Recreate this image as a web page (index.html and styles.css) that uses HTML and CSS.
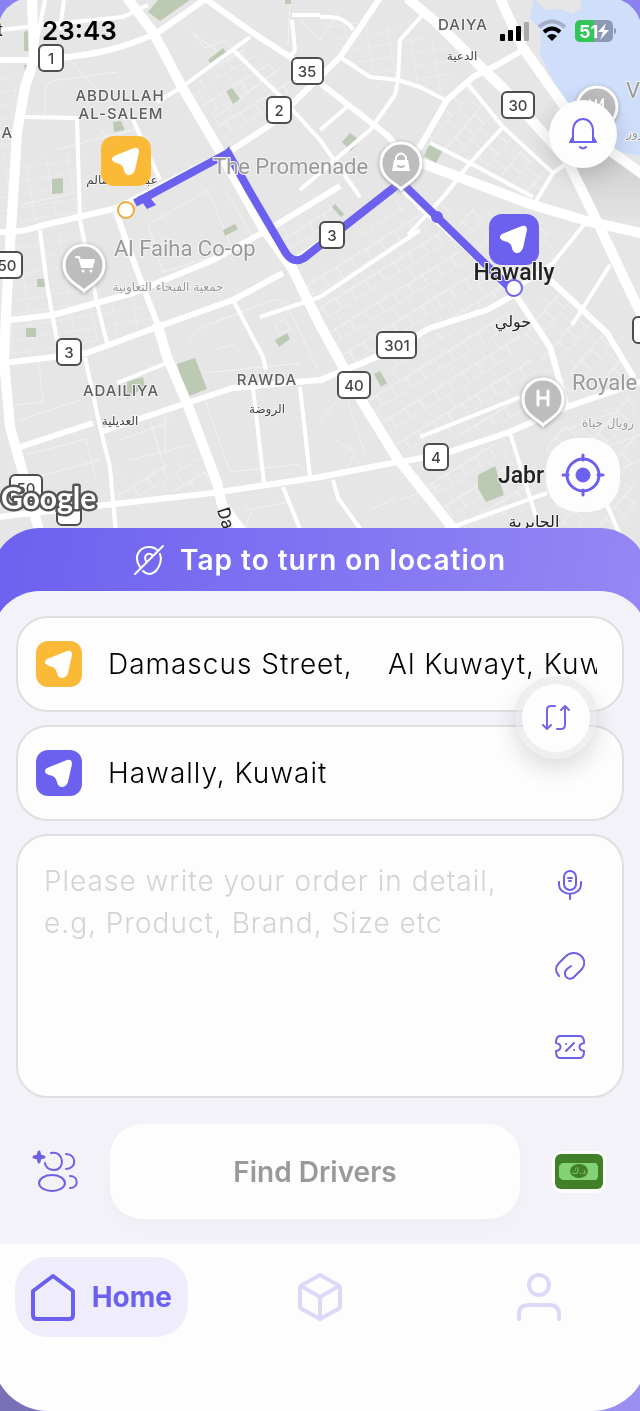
FILE: index.html
```html
<!DOCTYPE html>
<html lang="en">
<head>
    <meta charset="UTF-8">
    <meta name="viewport" content="width=device-width, initial-scale=1">
    <title>Find Drivers</title>
    <link rel="stylesheet" href="styles.css">
</head>
<body>
<div class="screen">
    <header class="map">
        <svg class="map-canvas" viewBox="0 0 640 550" preserveAspectRatio="xMidYMin slice">
            <defs>
                <pattern id="streets" width="17" height="26" patternUnits="userSpaceOnUse" patternTransform="rotate(-32)">
                    <path class="lane" d="M0 0H17M0 0V15M8 15V26M0 15H17"/>
                </pattern>
                <pattern id="streets-b" width="21" height="13" patternUnits="userSpaceOnUse" patternTransform="rotate(-9)">
                    <path class="lane" d="M0 0H21M0 0V13"/>
                </pattern>
                <pattern id="streets-c" width="15" height="30" patternUnits="userSpaceOnUse" patternTransform="rotate(-50)">
                    <path class="lane" d="M0 0H15M0 0V17M7 17V30M0 17H15"/>
                </pattern>
                <linearGradient id="shade" x1="0" y1="0" x2="0" y2="1">
                    <stop offset="0" stop-color="#777" stop-opacity=".22"/>
                    <stop offset="1" stop-color="#777" stop-opacity="0"/>
                </linearGradient>
                <path id="pin" d="M0 26C-4 21-20 16-20 0a20 20 0 0 1 40 0c0 16-16 21-20 26z"/>
                <path id="arrow" d="M-12-5L8-13Q13-14 13-9L9 9Q7 14 3 14-1 14-2 9-3 3-10 2-17-1-12-5z"/>
            </defs>

            <rect width="640" height="550" fill="#e6e6e6"/>

            <!-- water -->
            <path fill="#cedefb" d="M534 0L530 18 541 30 540 55 566 106 620 152 640 156V0z"/>
            <path fill="#e6e6e6" d="M536 0l8 10 16-1 12 5 10-6-2-8z"/>
            <path fill="url(#shade)" d="M610 150l30 20v60l-40-10-30-54z"/>

            <!-- blocks of small streets -->
            <path fill="url(#streets-b)" d="M0 240l82-12 22 112-100 18zM100 300l45-14 12 36-50 18zM25 160l50-6 4 60-60 12zM320 20l75 5 4 55-50-15zM400 30l60 20-14 45-42-14zM0 60l20 30-8 130H0z"/>
            <path fill="url(#streets)" d="M300 290l100-92 112 92-90 45-75 32zM365 395l50-55 92-28 50 95-155 45zM190 90l50-45 60 40-70 60zM265 235l55-45 26 40-52 22zM395 470l110-30 28 70-80 16zM120 475l90-20 8 30-100 15z"/>
            <path fill="url(#streets-c)" d="M415 145l50-60 38 42-34 32zM475 160l32-30 44 44-14 24zM520 330l30-48 55 50 30 45-68 26zM440 205l90 10 40 20-56 48zM545 435l90-40v130h-80z"/>
            <g class="lane">
                <path d="M45 120V90q3-10 12-10l60-8M55 150l85-22M20 205l55-12M70 60l55 60M100 130l50 45M190 30l15 18 22-8M148 225l60-35 25 60-70 22zM195 35l35 25M215 118l65-50M225 190l30 50"/>
                <path d="M190 340q5-10 20-16l62-24q14-2 18 12l28 58M205 373l95-10M215 350l20-6M275 325l10-6 5 10-10 6zM205 400l25 72 70-8M20 420l60-20M15 405l28-3-4-40M26 455l60-16 10 40M120 440l50-18M130 460l60-15M150 420l15 50M165 415v35M25 480l75-20M245 510l45-8M240 540l12-30M335 440l20 12-12 26M370 510l25-12M320 420l25-28 20 62"/>
                <path d="M290 0l-2 45M300 20l20 20 20-30M565 430l50-18M570 460l70-25M575 490l65-30M400 500l40-15"/>
            </g>

            <!-- parks -->
            <g fill="#bccab4">
                <path d="M148 12L158 0h32l-30 21zM24 32l8-3v22h-8zM24 65h7l-4 15zM208 60l15-12 3 4-16 11zM226 91l6-3 8 11-7 5zM113 122l8-1 4 9-11 2zM52 179l11-1v15l-11 1zM223 230l12-6 3 5-13 7zM342 142l8-9 10 7-9 11zM424 156l6-13 13 7-7 13zM332 207l3-3 9 10-3 3z"/>
                <path d="M37 279h8v8h-8zM26 328h10v9H26zM177 364l18-6 12 31-20 8zM127 382l16-5 2 9-18 13zM275 340l12-7 3 6-11 8zM374 374l6-3 7 12-6 4zM478 475l17-9 9 29-18 7-8-14zM285 0h6v4h-6z"/>
            </g>

            <!-- roads -->
            <g class="road road-wide">
                <path d="M127-2L153 32 182 87 215 143 262 226 292 268 320 325 363 403 397 458 456 532"/>
                <path d="M32-2L34 60 25 87 17 133 12 215 7 293 4 360 10 427 23 473 40 534"/>
                <path d="M157 323L167 357 187 403 217 483 222 505 245 535"/>
                <path d="M407-2L437 23 484 70 503 88 567 160 593 213 620 270 645 322"/>
                <path d="M500-2L523 48 567 110 602 145 645 176"/>
                <path d="M403 156L533 205 587 221 645 234"/>
            </g>
            <g class="road road-mid">
                <path d="M116 212L135 265 157 323M-2 60H28Q80 58 117 48 142 40 157 33L207-2"/>
                <path d="M207 0L253 33 290 57 320 83 387 135 400 150"/>
                <path d="M232 150L270 125 320 77 340 57 380-2"/>
                <path d="M-2 232Q20 233 40 226L117 208 228 152M3 363L87 353 157 327 233 300 283 273"/>
                <path d="M292 262L331 236 398 184M20 447L93 423M100 432L187 403 233 388 320 380 387 353 430 328 487 310 514 295"/>
                <path d="M-2 517L33 513 213 493 320 477 387 464 440 455 507 433 567 407 645 380"/>
                <path d="M523 50L497 65 473 77 447 100 420 147 400 167M403 190L483 263 517 297 550 347 567 407"/>
                <path d="M550 280L607 333 634 378M10 320L53 315 133 293 213 260 273 227 340 186"/>
            </g>
            <g class="road road-small">
                <path d="M0 30L43 25 123 17 148 5M182 87L250 37M182 87L157 102M233 50L277 93 320 140 360 197M25 117L77 118 80 220 97 303 107 343M130 113L160 180M40 230L47 285 57 340M85 357L100 427 110 467 116 534M117 383L167 363M233 300L263 357 266 370M253 388L264 483M300 387L310 477M283 487L302 534M333 480L338 498 364 534M387 350L320 382M45 0L34 55M60 30L64 0"/>
                <path d="M427 10L400 40 398 80 395 95 370 130 300 190M340 57L370 77 398 80 420 87 447 101M320 17Q345 15 353 30M320 130L347 107M467 83L503 127 553 173 567 163M503 127L470 163 445 195 408 235M430 143L470 163 533 197M533 206L553 173M587 221L553 263 514 290M320 297L420 230M420 437L520 397M510 433L537 520M607 505L620 535M430 535L547 493M292 20L295 50 290 57M292 15H320M572 325L610 265M418 207L465 245M320 297l-60 20"/>
            </g>

            <!-- points of interest -->
            <g class="poi">
                <use href="#pin" x="84" y="265"/><use href="#pin" x="543" y="399"/>
                <use href="#pin" x="597" y="107"/>
            </g>
            <g fill="none" stroke="#fff" stroke-width="2" stroke-linecap="round" stroke-linejoin="round">
                <path d="M76 257h3l3 10h10l2-7H80" fill="#fff"/><path d="M83 271h.1M91 271h.1" stroke-width="3"/>
                <path d="M538 391v14M548 391v14M538 398h10" stroke-width="3"/>
                <path d="M590 100v6h6v-6M599 106l4-7v8"/>
            </g>

            <!-- route -->
            <path class="route" d="M135 203L228 153 250 192 284 250Q292 265 304 258L401 182 436 216 516 294"/>
            <path fill="#6c60ef" d="M138 196l10-1 8 10-9 4zM222 155l7-9 4 13zM431 217a6 6 0 1 1 12 0 6 6 0 0 1-12 0z"/>
            <g class="poi"><use href="#pin" x="401" y="163"/></g>
            <g fill="none" stroke-width="2" stroke-linecap="round">
                <path stroke="#fff" d="M396 160v-3q5-7 10 0v3"/><path fill="#fff" d="M394 160h14l2 11h-18z"/>
                <path stroke="#b9b9b9" d="M398 166q3 2 6 0"/>
            </g>

            <!-- road shields -->
            <g class="shield">
                <rect x="39" y="45" width="24" height="26" rx="5"/><text x="51" y="64">1</text>
                <rect x="292" y="58" width="31" height="26" rx="5"/><text x="307" y="77">35</text>
                <rect x="267" y="97" width="24" height="26" rx="5"/><text x="279" y="116">2</text>
                <rect x="502" y="92" width="32" height="26" rx="5"/><text x="518" y="111">30</text>
                <rect x="320" y="222" width="24" height="26" rx="5"/><text x="332" y="241">3</text>
                <rect x="-9" y="252" width="31" height="26" rx="5"/><text x="7" y="271">50</text>
                <rect x="57" y="339" width="24" height="26" rx="5"/><text x="69" y="358">3</text>
                <rect x="377" y="332" width="39" height="26" rx="5"/><text x="397" y="351">301</text>
                <rect x="338" y="372" width="32" height="26" rx="5"/><text x="354" y="391">40</text>
                <rect x="424" y="444" width="24" height="26" rx="5"/><text x="436" y="463">4</text>
                <rect x="633" y="317" width="24" height="26" rx="5"/>
                <rect x="10" y="475" width="32" height="26" rx="5"/><text x="26" y="494">50</text>
                <rect x="57" y="499" width="24" height="26" rx="5"/>
            </g>

            <!-- labels -->
            <g class="label area">
                <text x="120" y="101">ABDULLAH</text><text x="121" y="119">AL-SALEM</text>
                <text x="463" y="30">DAIYA</text><text x="121" y="396">ADAILIYA</text><text x="267" y="385">RAWDA</text>
                <text x="5" y="138">'A</text>
            </g>
            <g class="label arabic">
                <text x="462" y="60">الدعية</text><text x="120" y="425">العديلية</text><text x="267" y="413">الروضة</text>
                <text x="122" y="184">عبدالله السالم</text>
            </g>
            <g class="label place">
                <text x="213" y="174">The Promenade</text><text x="114" y="256">Al Faiha Co-op</text>
                <text x="572" y="390">Royale</text><text x="626" y="98">V</text>
            </g>
            <g class="label arabic arabic-place">
                <text x="168" y="291">جمعية الفيحاء التعاونية</text><text x="608" y="427">رويال حياة</text><text x="635" y="137">روز</text>
            </g>
            <g class="label town">
                <text x="521" y="483">Jabr</text>
                <text class="town-small" x="0" y="36">t</text>
                <text class="town-small" transform="translate(220 520) rotate(72)">Da</text>
            </g>
            <g class="label arabic arabic-town">
                <text x="513" y="327">حولي</text><text x="534" y="527">الجابرية</text>
            </g>
            <text class="google" x="1" y="509">Google</text>

            <!-- pickup and drop off -->
            <rect x="101" y="136" width="50" height="50" rx="13" fill="#fbb938"/>
            <use href="#arrow" x="126" y="161" fill="#fff"/>
            <circle cx="126" cy="210" r="8" fill="#fff" stroke="#f0aa35" stroke-width="2"/>
            <rect x="489" y="214" width="50" height="51" rx="13" fill="#6c60ef"/>
            <use href="#arrow" x="514" y="239" fill="#fff"/>
            <text class="label town" x="514" y="280">Hawally</text>
            <circle cx="514" cy="288" r="8" fill="#fff" stroke="#6c60ef" stroke-width="2"/>

            <path fill="#8b80ef" d="M0 0H19Q5 6 0 19zM640 0H621Q635 6 640 20z"/>
        </svg>

        <div class="status">
            <time class="clock">23:43</time>
            <svg width="114" height="24" viewBox="0 0 114 24">
                <g>
                    <rect x="1" y="15" width="5" height="7" rx="1"/><rect x="9" y="11" width="5" height="11" rx="1"/>
                    <rect x="17" y="7" width="5" height="15" rx="1"/><rect x="25" y="3" width="5" height="19" rx="1" fill="#aaa"/>
                </g>
                <g fill="none" stroke-width="4">
                    <path stroke="#a5b0c8" d="M40 8Q53-3 66 8"/><path stroke="#000" d="M45 13Q53 6 61 13"/>
                </g>
                <path d="M48 17q5-4 10 0l-5 5z"/>
                <path fill="#8d99b2" d="M82 1h26q6 0 6 6v10q0 6-6 6H82q-6 0-6-6V7q0-6 6-6z"/>
                <path fill="#30c658" d="M82 1h13v22H82q-6 0-6-6V7q0-6 6-6z"/>
                <text class="battery" x="80" y="19">51</text>
                <path fill="#fff" d="M107 4l-8 9h5l-3 8 9-10h-5z"/>
            </svg>
            <span class="battery-tip"></span>
        </div>

        <button class="round-btn bell" aria-label="Notifications">
            <svg width="30" height="34" viewBox="0 0 30 34" fill="none" stroke="#6c60ef" stroke-width="2" stroke-linecap="round" stroke-linejoin="round">
                <path d="M2 25H28M5 25V14C5-2 25-2 25 14v11M5 20l-3 5M25 20l3 5"/><path d="M12 30q3 3 6 0"/>
            </svg>
        </button>
        <button class="round-btn locate" aria-label="My location">
            <svg width="44" height="44" viewBox="0 0 44 44" fill="none" stroke="#6c60ef" stroke-width="3" stroke-linecap="round">
                <circle cx="22" cy="22" r="16"/><circle cx="22" cy="22" r="7" fill="#6c60ef" stroke-width="1"/>
                <path d="M22 2v5M22 37v5M2 22h5M37 22h5"/>
            </svg>
        </button>
    </header>

    <main class="panel">
        <button class="location-banner">
            <svg width="30" height="30" viewBox="0 0 30 30" fill="none" stroke="#fff" stroke-width="2" stroke-linecap="round">
                <path d="M1 29L29 1M6 22C-1 12 5 2 15 2q6 0 9 4M26 9c3 8-3 20-11 20q-3 0-6-3M12 16c-3-6 3-9 6-6"/>
            </svg>
            Tap to turn on location
        </button>

        <form class="sheet">
            <div class="order">
                <label class="field">
                    <svg class="field-icon" viewBox="0 0 46 46" role="img" aria-label="Pickup">
                        <rect width="46" height="46" rx="12" fill="#fbb938"/><use href="#arrow" x="23" y="23" fill="#fff"/>
                    </svg>
                    <input type="text" value="Damascus Street,    Al Kuwayt, Kuwait">
                </label>
                <label class="field">
                    <svg class="field-icon" viewBox="0 0 46 46" role="img" aria-label="Drop off">
                        <rect width="46" height="46" rx="12" fill="#6c60ef"/><use href="#arrow" x="23" y="23" fill="#fff"/>
                    </svg>
                    <input type="text" value="Hawally, Kuwait">
                </label>
                <button type="button" class="swap" aria-label="Swap addresses">
                    <svg width="28" height="26" viewBox="0 0 28 26" fill="none" stroke="#7566e4" stroke-width="2" stroke-linecap="round" stroke-linejoin="round">
                        <path d="M13 1H9Q5 1 5 5V24M1 20l4 4 4-4M15 24h4q4 0 4-4V1M19 5l4-4 4 4"/>
                    </svg>
                </button>

                <div class="field details">
                    <textarea aria-label="Order details" placeholder="Please write your order in detail, e.g, Product, Brand, Size etc"></textarea>
                    <div class="tools">
                        <button type="button" aria-label="Record">
                            <svg width="30" height="30" viewBox="0 0 30 30">
                                <rect x="9" y="1" width="12" height="19" rx="6"/><path d="M4 12v2c0 13 22 13 22 0v-2M15 24v5M13 8h4M14 11h2"/>
                            </svg>
                        </button>
                        <button type="button" aria-label="Attach">
                            <svg width="30" height="30" viewBox="0 0 30 30">
                                <path d="M4 25C0 21 0 16 4 12L10 6C20-4 35 7 27 18L20 25C14 32 6 24 12 18L16 15"/>
                            </svg>
                        </button>
                        <button type="button" aria-label="Coupon">
                            <svg width="30" height="30" viewBox="0 0 30 30">
                                <path d="M5 4H25Q29 4 29 11C23 12 23 18 29 19Q29 26 25 26H5Q1 26 1 19C7 18 7 12 1 11Q1 4 5 4zM11 19l8-8M11 12h.1M19 18h.1"/>
                            </svg>
                        </button>
                    </div>
                </div>
            </div>

            <div class="actions">
                <button type="button" class="plain" aria-label="Choose drivers">
                    <svg width="46" height="46" viewBox="0 0 46 46" fill="none" stroke="#6c60e4" stroke-width="2" stroke-linecap="round">
                        <path d="M7 3l1 4 4 1-4 1-1 4-1-4-4-1 4-1z" stroke-width="3" stroke-linejoin="round"/>
                        <path d="M19 4c13-3 15 17 3 17-5 0-9-3-9-7"/><ellipse cx="20" cy="34" rx="13" ry="8"/>
                        <path d="M34 5c11 0 11 15 0 15M38 27c9 0 9 12 0 12"/>
                    </svg>
                </button>
                <button type="button" class="find">Find Drivers</button>
                <button type="button" class="plain cash" aria-label="Pay with cash">
                    <svg width="54" height="42" viewBox="0 0 54 42">
                        <rect width="54" height="42" rx="10" fill="#fdfdfd"/><rect x="3" y="3" width="48" height="35" rx="6" fill="#417f28"/>
                        <path fill="#83d275" d="M10 12H44l2 3v11l-2 3H10l-3-3V15z"/><ellipse cx="27" cy="20" rx="9" ry="7" fill="#417f28"/>
                        <text class="dinar" x="27" y="23">د.ك</text>
                    </svg>
                </button>
            </div>
        </form>

        <nav class="tabs">
            <a href="#" class="tab active">
                <svg width="44" height="48" viewBox="0 0 44 48"><path d="M2 18L22 3 42 18V42Q42 46 38 46H6Q2 46 2 42z"/></svg>
                Home
            </a>
            <a href="#" class="tab" aria-label="Orders">
                <svg width="44" height="48" viewBox="0 0 44 48"><path d="M22 2L40 12Q42 13 42 15V33Q42 35 40 36L22 46 4 36Q2 35 2 33V15Q2 13 4 12zM3 13L22 24 41 13M22 24V46"/></svg>
            </a>
            <a href="#" class="tab" aria-label="Profile">
                <svg width="44" height="48" viewBox="0 0 44 48"><circle cx="22" cy="12" r="10"/><path d="M2 46V41Q2 32 12 32H32Q42 32 42 41V46"/></svg>
            </a>
        </nav>
    </main>
</div>
</body>
</html>
```

FILE: styles.css
```css
* {
    box-sizing: border-box;
}

body {
    margin: 0;
    font-family: Inter, "Liberation Sans", sans-serif;
    color: #111;
    background: linear-gradient(90deg, #786fb4, #9b90f2);
}

button {
    padding: 0;
    border: none;
    font-family: inherit;
    cursor: pointer;
}

.screen {
    display: flex;
    flex-direction: column;
    min-height: 100vh;
    overflow: hidden;
}

/* map */
.map {
    position: relative;
    height: 620px;
    margin-bottom: -92px;
    background: #e6e6e6;
}

.map-canvas {
    display: block;
    width: 100%;
    height: 550px;
}

.lane {
    fill: none;
    stroke: #f2f2f2;
    stroke-width: 1;
}

.road {
    fill: none;
    stroke: #fff;
    stroke-linejoin: round;
}

.road-wide {
    stroke-width: 10;
}

.road-mid {
    stroke-width: 6;
}

.road-small {
    stroke-width: 4;
}

.route {
    fill: none;
    stroke: #6c60ef;
    stroke-width: 8;
    stroke-linejoin: round;
}

.poi {
    fill: #bdbdbd;
    stroke: #fff;
    stroke-width: 3;
    filter: drop-shadow(0 1px 2px #999);
}

.shield rect {
    fill: #fff;
    stroke: #4d4d4d;
    stroke-width: 2;
}

.shield text {
    fill: #444;
    font-size: 15px;
    font-weight: 500;
    text-anchor: middle;
}

.label {
    paint-order: stroke;
    stroke: #f5f5f5;
    stroke-width: 2px;
    stroke-linejoin: round;
    text-anchor: middle;
}

.area {
    fill: #5c5e62;
    font-size: 15px;
    font-weight: 500;
    letter-spacing: 1px;
}

.arabic {
    fill: #444;
    font-family: "DejaVu Sans", sans-serif;
    font-size: 12px;
}

.arabic-place {
    fill: #999;
}

.arabic-town {
    fill: #222;
    font-size: 16px;
}

.place {
    fill: #999;
    font-family: Roboto, "Liberation Sans", sans-serif;
    font-size: 22px;
    text-anchor: start;
}

.town {
    fill: #222;
    font-family: Roboto, "Liberation Sans", sans-serif;
    font-size: 23px;
    font-weight: 500;
}

.town-small {
    font-size: 18px;
    font-weight: 400;
}

.google {
    fill: #fff;
    stroke: #555;
    stroke-width: 5px;
    stroke-linejoin: round;
    paint-order: stroke;
    font-family: Lato, sans-serif;
    font-size: 30px;
    font-weight: 700;
}

.status {
    position: absolute;
    top: 16px;
    left: 42px;
    right: 24px;
    display: flex;
    align-items: center;
}

.clock {
    margin-right: auto;
    color: #000;
    font-size: 26px;
    line-height: 30px;
    font-weight: 600;
}

.battery {
    fill: #fff;
    font-size: 18px;
    font-weight: 700;
}

.battery-tip {
    width: 2px;
    height: 6px;
    margin-left: 1px;
    border-radius: 0 2px 2px 0;
    background: #8d99b2;
}

.round-btn {
    position: absolute;
    display: grid;
    place-items: center;
    background: #fdfdfd;
}

.bell {
    top: 100px;
    right: 23px;
    width: 68px;
    height: 68px;
    border-radius: 50%;
    box-shadow: 0 6px 24px rgba(0, 0, 0, .18);
}

.locate {
    top: 438px;
    right: 20px;
    width: 74px;
    height: 74px;
    border-radius: 32px;
}

/* panel over the map */
.panel {
    position: relative;
    display: flex;
    flex: 1;
    flex-direction: column;
    margin: 0 -8px;
    border-radius: 48px 48px 56px 56px;
    overflow: hidden;
    background: linear-gradient(100deg, #6c60ef, #9f90f6);
}

.location-banner {
    display: flex;
    align-items: center;
    justify-content: center;
    gap: 16px;
    height: 63px;
    background: none;
    color: #fff;
    font-size: 28px;
    font-weight: 600;
    letter-spacing: 1px;
}

.sheet {
    padding: 25px 24px 25px;
    border-radius: 48px 48px 0 0;
    background: #f3f2f8;
}

.order {
    position: relative;
    display: grid;
    gap: 13px;
}

.field {
    display: flex;
    align-items: center;
    gap: 26px;
    height: 96px;
    padding: 0 25px 0 18px;
    border: 2px solid #dfdfe2;
    border-radius: 32px;
    background: #fdfdfd;
}

.field-icon {
    flex: none;
    width: 46px;
    height: 46px;
}

.field input,
.field textarea {
    flex: 1;
    min-width: 0;
    padding: 0;
    border: none;
    outline: none;
    background: none;
    color: #000;
    font-family: inherit;
    font-size: 28px;
    font-weight: 300;
    letter-spacing: 1px;
}

.swap {
    position: absolute;
    top: 60px;
    right: 26px;
    display: grid;
    place-items: center;
    width: 84px;
    height: 84px;
    border: 8px solid rgba(225, 225, 228, .5);
    border-radius: 50%;
    background: #fdfdfd;
    background-clip: padding-box;
    box-shadow: 0 10px 22px rgba(0, 0, 0, .12);
}

.details {
    align-items: stretch;
    gap: 20px;
    height: 264px;
    padding: 24px 37px 24px 26px;
}

.field textarea {
    line-height: 42px;
    resize: none;
}

.field textarea::placeholder {
    color: #d3d3d5;
    opacity: 1;
}

.tools {
    display: flex;
    flex-direction: column;
    justify-content: space-between;
    padding: 10px 0;
}

.tools button {
    display: block;
    height: 30px;
    background: none;
}

.tools svg {
    fill: none;
    stroke: #6c60e4;
    stroke-width: 2;
    stroke-linecap: round;
    stroke-linejoin: round;
}

.actions {
    display: flex;
    align-items: center;
    gap: 32px;
    padding: 0 18px 0 16px;
    margin-top: 26px;
}

.plain {
    display: grid;
    background: none;
}

.find {
    flex: 1;
    height: 95px;
    border-radius: 32px;
    background: #fdfdfd;
    color: #999;
    font-size: 28px;
    font-weight: 600;
    box-shadow: 0 8px 24px rgba(0, 0, 0, .02);
}

.dinar {
    fill: #83d275;
    font-family: "DejaVu Sans", sans-serif;
    font-size: 9px;
    text-anchor: middle;
}

/* bottom navigation */
.tabs {
    display: grid;
    grid-template-columns: repeat(3, 1fr);
    flex: 1;
    align-items: start;
    justify-items: center;
    padding: 13px 0 74px;
    background: #fdfdfd;
}

.tab {
    display: flex;
    align-items: center;
    gap: 17px;
    height: 80px;
    padding: 0 16px;
    border-radius: 32px;
    color: #6c60ef;
    font-size: 28px;
    font-weight: 700;
    text-decoration: none;
}

.tab svg {
    fill: none;
    stroke: #dcd8f8;
    stroke-width: 4;
    stroke-linecap: round;
    stroke-linejoin: round;
}

.active {
    background: #efedfb;
}

.active svg {
    stroke: #6c60ef;
}
```
